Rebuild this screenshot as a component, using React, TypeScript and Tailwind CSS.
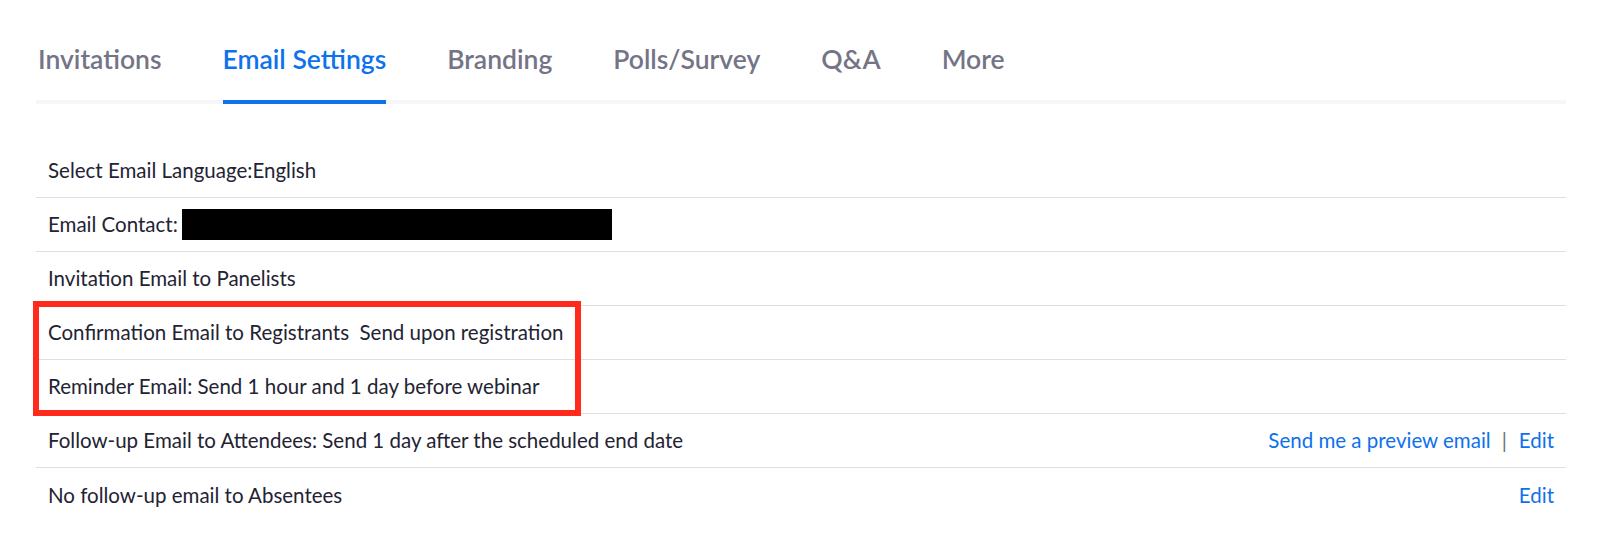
import React from "react";

const tabs = ["Invitations", "Email Settings", "Branding", "Polls/Survey", "Q&A", "More"];

function App() {
  return (
    <div className="w-[1600px] h-[550px] bg-white pl-[36px] pr-[34px] pt-[43px] font-['Lato','Noto_Sans',sans-serif] text-[#232333]">
      <div className="flex gap-[61px] pl-[2px] border-b-4 border-[#f6f6f8]">
        {tabs.map((t) => (
          <div
            key={t}
            className={
              t === "Email Settings"
                ? "-mb-1 pb-[25px] border-b-4 border-[#0e72ed] text-[#0e72ed] text-[26.5px] leading-[32px] font-semibold"
                : "-mb-1 pb-[25px] border-b-4 border-transparent text-[#747487] text-[26.5px] leading-[32px] font-semibold"
            }
          >
            {t}
          </div>
        ))}
      </div>

      <div className="relative mt-[40px] text-[20.5px]">
        <div className="h-[54px] border-b border-[#dfdfe3] flex items-center px-3">
          Select Email Language:English
        </div>
        <div className="h-[54px] border-b border-[#dfdfe3] flex items-center px-3">
          <span>Email Contact:</span>
          <span className="ml-[4px] w-[430px] h-[31px] bg-black" />
        </div>
        <div className="h-[54px] border-b border-[#dfdfe3] flex items-center px-3">
          Invitation Email to Panelists
        </div>
        <div className="h-[54px] border-b border-[#dfdfe3] flex items-center px-3">
          Confirmation Email to Registrants&nbsp; Send upon registration
        </div>
        <div className="h-[54px] border-b border-[#dfdfe3] flex items-center px-3">
          Reminder Email: Send 1 hour and 1 day before webinar
        </div>
        <div className="h-[54px] border-b border-[#dfdfe3] flex items-center px-3">
          <span>Follow-up Email to Attendees: Send 1 day after the scheduled end date</span>
          <div className="ml-auto flex items-center text-[#0e71eb]">
            <span>Send me a preview email</span>
            <span className="ml-[11px] mr-[12px] text-[#6e7076]">|</span>
            <span>Edit</span>
          </div>
        </div>
        <div className="h-[54px] flex items-center px-3">
          <span>No follow-up email to Absentees</span>
          <span className="ml-auto text-[#0e71eb]">Edit</span>
        </div>

        {/* highlight box drawn over rows 4-5 */}
        <div className="absolute left-[-3px] top-[157px] w-[548px] h-[115px] border-[6px] border-[#ff2a1c] pointer-events-none" />
      </div>
    </div>
  );
}

export default App;
